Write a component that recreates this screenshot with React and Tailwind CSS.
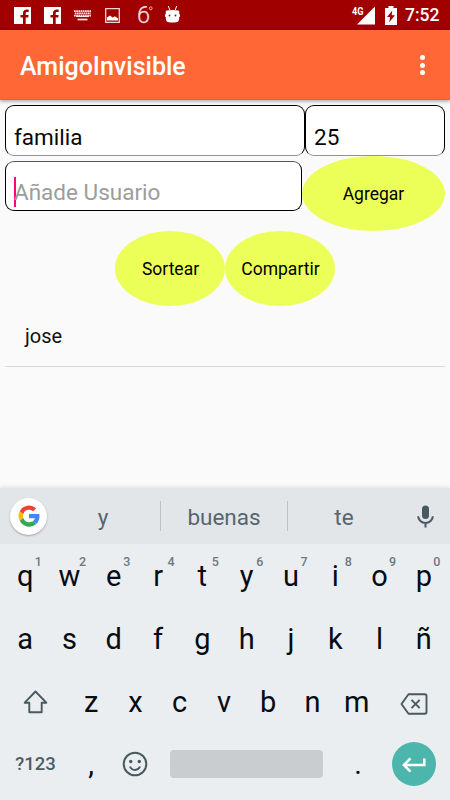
import React from "react";

const SUGGEST = "flex items-center justify-center pt-[3px] text-[22.5px] text-[#54666e]";
const TOP_ROW = ["q", "w", "e", "r", "t", "y", "u", "i", "o", "p"];
const HOME_ROW = ["a", "s", "d", "f", "g", "h", "j", "k", "l", "ñ"];
const BOTTOM_ROW = ["z", "x", "c", "v", "b", "n", "m"];

function Facebook({ className }) {
  return (
    <svg className={className} width="17" height="17" viewBox="0 0 17 17">
      <path
        fill="#fff"
        d="M0 0h17v17h-5.300v-6.500h2.500l.4-2.600h-2.900V6.300c0-.9.4-1.400 1.500-1.400h1.500V2.500c-.6-.1-1.200-.1-1.800-.1C10.500 2.400 9 3.600 9 6v1.900H6.500v2.600H9V17H0z"
      />
    </svg>
  );
}

function StatusBar() {
  return (
    <header className="flex h-[30px] shrink-0 items-center bg-[#a10000] pl-[14px] pr-[10px] text-white">
      <Facebook />
      <Facebook className="ml-[13px]" />
      <svg className="ml-[13px]" width="17" height="11" viewBox="0 0 17 11" fill="none" stroke="#fbe6e6">
        <path d="M0 1.200h17M.8 3.400h16M0 5.600h17" strokeWidth="1.700" strokeDasharray="1.700 .5" />
        <path d="M2 6.500h13" strokeWidth="1" />
        <path d="M3.500 9.500h10" strokeWidth="1.700" />
      </svg>
      <svg className="ml-[14px]" width="15" height="15" viewBox="0 0 15 15">
        <path d="M.7.700h13.600v13.600H.700z" fill="none" stroke="#f1d5d5" strokeWidth="1.300" />
        <path d="M2 12.500V9.500l3-2 2.500 2L10 8.300l3 2.200v2z" fill="#fff" />
      </svg>
      <svg className="ml-[17px]" width="16" height="18" viewBox="0 0 16 18">
        <text x="0" y="17" fill="#f8dede" fontFamily="Roboto" fontWeight="300" fontSize="23.500" stroke="#f8dede" strokeWidth=".3">
          6
        </text>
        <circle cx="13.700" cy="2.300" r="1.400" fill="none" stroke="#f0c4c4" strokeWidth=".9" />
      </svg>
      <svg className="mb-[2px] ml-[12px]" width="15" height="17" viewBox="0 0 15 17">
        <path d="M3.300 0l1.500 4M11.700 0l-1.500 4" stroke="#fff" strokeWidth="1" />
        <path
          fill="#fff"
          d="M.8 4.800Q7.500 3 14.200 4.800V8l.8.400v2l-.8.600c0 2.500-.3 3.800-1.100 4.500-1.200 1.300-10 1.300-11.200 0C1.100 14.800.8 13.500.8 11L0 10.400v-2L.8 8z"
        />
        <circle cx="4.500" cy="9.500" r=".9" fill="#a10000" />
        <circle cx="10.500" cy="9.500" r=".9" fill="#a10000" />
      </svg>
      <div className="flex-1" />
      <svg width="23" height="19" viewBox="0 0 23 19" overflow="visible">
        <path d="M23 .5v18H5z" fill="#fff" />
        <text x="0" y="9" fill="#fff" fontFamily="Roboto" fontWeight="700" fontSize="10.500" textLength="11.500" lengthAdjust="spacingAndGlyphs">
          4G
        </text>
      </svg>
      <svg className="ml-[10px]" width="12" height="19" viewBox="0 0 12 19">
        <path d="M3.500 0h5v2H12v17H0V2h3.500z" fill="#fff" />
        <path d="M7.300 4.500L2 11h3.200l-1 5.200L10 9.300H6.700z" fill="#a10000" />
      </svg>
      <span className="ml-[8px] w-[35px] whitespace-nowrap pt-px text-[17.5px] font-medium">7:52</span>
    </header>
  );
}

function AppBar() {
  return (
    <div className="z-10 flex h-[70px] shrink-0 items-center justify-between border-b border-[#ff5a1c] bg-[#ff6737] pb-[3px] pl-5 pr-[25px] shadow-[0_1px_4px_rgba(0,0,0,0.4)]">
      <h1 className="pt-[7px] text-[25px] font-medium leading-none text-white">AmigoInvisible</h1>
      <div className="flex flex-col gap-[2.500px] pt-[4px]">
        <i className="size-[5px] rounded-full bg-white" />
        <i className="size-[5px] rounded-full bg-white" />
        <i className="size-[5px] rounded-full bg-white" />
      </div>
    </div>
  );
}

function OvalButton({ className, children }) {
  return (
    <button className={`flex h-[75px] items-center justify-center rounded-[50%] bg-[#ecff59] pt-[2px] text-[17.5px] text-black ${className}`}>
      {children}
    </button>
  );
}

function Key({ label, hint }) {
  return (
    <div className="flex min-w-0 flex-1 items-center justify-center text-[29px] text-[#050c12]">
      <div className="relative pt-[2px]">
        {label}
        {hint && (
          <span className="absolute left-1/2 top-px ml-[9.500px] text-[12.5px] font-medium leading-4 text-[#6b7a81]">{hint}</span>
        )}
      </div>
    </div>
  );
}

function Keyboard() {
  return (
    <section className="flex h-[312px] shrink-0 flex-col bg-[#ebeef1] shadow-[0_-1px_4px_rgba(0,0,0,0.1)]">
      <div className="flex h-14 items-center bg-[#e3e6e8]">
        <div className="ml-[10px] flex size-[37px] items-center justify-center rounded-full bg-white shadow-[0_1px_2px_rgba(0,0,0,0.3)]">
          <svg width="22" height="22" viewBox="2 2 44 44">
            <path fill="#fbbc05" d="M12.600 28.200a12 12 0 010-8.400l-7.100-5.500a21 21 0 000 19.400z" />
            <path fill="#ea4335" d="M24 11.500c3.200 0 6 1.100 8.200 3.200l6-6A21 21 0 005.500 14.300l7.100 5.500A12 12 0 0124 11.500z" />
            <path fill="#34a853" d="M24 36.500a12 12 0 01-11.400-8.300l-7.100 5.500A21 21 0 0038.300 40l-6.800-5.300c-2 1.200-4.500 1.800-7.500 1.800z" />
            <path fill="#4285f4" d="M45 24.500c0-1.500-.2-3-.4-4.300H24v8.300h11.800a10 10 0 01-4.300 6.200l6.800 5.300c4.200-4 6.700-9 6.700-15.500z" />
          </svg>
        </div>
        <span className={`${SUGGEST} w-[113px] pr-px`}>y</span>
        <i className="h-[30px] w-px bg-[#bcc2c5]" />
        <span className={`${SUGGEST} w-[126px]`}>buenas</span>
        <i className="h-[30px] w-px bg-[#bcc2c5]" />
        <span className={`${SUGGEST} w-[112px]`}>te</span>
        <svg className="ml-[17px]" width="17" height="23" viewBox="0 0 17 23" fill="none" stroke="#48595f">
          <path d="M8.500 4v6.500" strokeWidth="7" strokeLinecap="round" />
          <path d="M1.200 11.200a7.300 6.700 0 0014.600 0M8.500 18v4.500" strokeWidth="2" />
        </svg>
      </div>
      <div className="flex h-[63px] pl-[3px] pr-[4px]">
        {TOP_ROW.map((k, i) => (
          <Key key={k} label={k} hint={String((i + 1) % 10)} />
        ))}
      </div>
      <div className="flex h-[63px] pl-[3px] pr-[4px]">
        {HOME_ROW.map((k) => (
          <Key key={k} label={k} />
        ))}
      </div>
      <div className="flex h-[63px]">
        <div className="flex w-[69px] items-center justify-center pl-[2px]">
          <svg width="25" height="24" viewBox="0 0 25 24" fill="none" stroke="#48595f" strokeWidth="1.900" strokeLinejoin="round">
            <path d="M12.500 1.500L1.700 12.700h4.600v9.500h12.400v-9.500h4.600z" />
          </svg>
        </div>
        <div className="flex w-[310px]">
          {BOTTOM_ROW.map((k) => (
            <Key key={k} label={k} />
          ))}
        </div>
        <div className="flex flex-1 items-center justify-center pr-[2px] pt-[4px]">
          <svg width="28" height="22" viewBox="0 0 28 22" fill="none" stroke="#48595f" strokeWidth="1.900" strokeLinejoin="round">
            <path d="M8.500 1.200h16.300q1.700 0 1.700 1.700v16.200q0 1.700-1.700 1.700H8.500L1.500 11z" />
            <path d="M11.500 6.800l8.200 8.400M19.700 6.800l-8.200 8.400" />
          </svg>
        </div>
      </div>
      <div className="flex h-[62px] items-center">
        <span className="w-[69px] pl-[2px] pt-px text-center text-[18.5px] font-medium text-[#4b5c64]">?123</span>
        <span className="w-11 pt-px text-center text-[29px] text-[#050c12]">,</span>
        <div className="flex w-11 justify-center">
          <svg width="26" height="26" viewBox="0 0 26 26" fill="none" stroke="#48595f" strokeWidth="2">
            <circle cx="13" cy="13" r="11.300" />
            <path d="M8 15.500c1.800 4.600 8.200 4.600 10 0" />
            <circle cx="8.700" cy="10.500" r="1.700" fill="#48595f" stroke="none" />
            <circle cx="17.300" cy="10.500" r="1.700" fill="#48595f" stroke="none" />
          </svg>
        </div>
        <div className="ml-[13px] h-7 w-[153px] rounded-[4px] bg-[#c9cdcf]" />
        <span className="ml-[13px] w-11 pt-px text-center text-[29px] text-[#050c12]">.</span>
        <button className="ml-[12px] flex size-11 items-center justify-center rounded-full bg-[#4db6ac] pt-px">
          <svg width="24" height="16" viewBox="0 0 24 16" fill="none" stroke="#fff" strokeWidth="2.500">
            <path d="M22.300 1.500V8H2.500M8.500 1.300L1.900 8l6.600 6.700" />
          </svg>
        </button>
      </div>
    </section>
  );
}

export default function App() {
  return (
    <div className="flex h-[800px] w-[450px] flex-col overflow-hidden bg-[#fafafa] font-['Roboto',sans-serif]">
      <StatusBar />
      <AppBar />
      <main className="flex flex-1 flex-col px-[5px] pt-[5px]">
        <div className="flex h-[51px] text-[22.5px] text-[#080808]">
          <div className="flex w-[300px] items-center rounded-[9px] border border-b-[#929292] border-black bg-white pl-[8px] pt-[14px]">familia</div>
          <div className="flex flex-1 items-center rounded-[9px] border border-b-[#929292] border-black bg-white pl-[8px] pt-[14px]">25</div>
        </div>
        <div className="flex">
          <div className="mt-[5px] flex h-[50px] w-[297px] items-center rounded-[9px] border border-black border-t-[#555] bg-white pl-[8px] pt-[11px] text-[22.5px] text-[#9c9c9c]">
            <i className="-mr-[2px] h-[30px] w-[2px] bg-[#ff0080]" />
            <span className="pt-[3px]">Añade Usuario</span>
          </div>
          <OvalButton className="-mt-[0.5px] flex-1">Agregar</OvalButton>
        </div>
        <div className="mt-[0.5px] flex justify-center">
          <OvalButton className="w-[110px] pl-px">Sortear</OvalButton>
          <OvalButton className="w-[110px] pl-px">Compartir</OvalButton>
        </div>
        <div className="flex h-[61px] items-center border-b border-[#d9d9d9] pl-5 text-[20px] text-[#111]">jose</div>
      </main>
      <Keyboard />
    </div>
  );
}
